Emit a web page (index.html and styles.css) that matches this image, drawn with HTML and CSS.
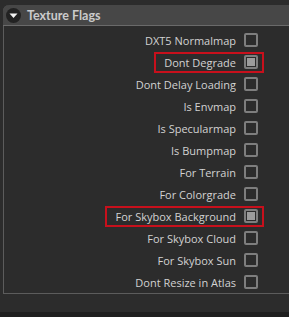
FILE: index.html
```html
<!DOCTYPE html>
<html>
<head>
	<title>Texture Flags</title>
	<meta charset="utf-8">
	<link rel="stylesheet" href="styles.css">
</head>

<body>
	<div class="panel">
		<div class="panel-head">
			<span class="toggle"><svg width="15" height="15" viewBox="0 0 15 15"><circle cx="7.5" cy="7.5" r="7.5" fill="#222"/><path d="M3.5 5.5 L11.5 5.5 L7.5 10 Z" fill="#f2f2f2"/></svg></span>
			<span class="title">Texture Flags</span>
		</div>
		<div class="flags">
			<div class="row"><label class="item">DXT5 Normalmap<span class="box"></span></label></div>
			<div class="row"><label class="item mark">Dont Degrade<span class="box on"></span></label></div>
			<div class="row"><label class="item">Dont Delay Loading<span class="box"></span></label></div>
			<div class="row"><label class="item">Is Envmap<span class="box"></span></label></div>
			<div class="row"><label class="item">Is Specularmap<span class="box"></span></label></div>
			<div class="row"><label class="item">Is Bumpmap<span class="box"></span></label></div>
			<div class="row"><label class="item">For Terrain<span class="box"></span></label></div>
			<div class="row"><label class="item">For Colorgrade<span class="box"></span></label></div>
			<div class="row"><label class="item mark">For Skybox Background<span class="box on"></span></label></div>
			<div class="row"><label class="item">For Skybox Cloud<span class="box"></span></label></div>
			<div class="row"><label class="item">For Skybox Sun<span class="box"></span></label></div>
			<div class="row"><label class="item">Dont Resize in Atlas<span class="box"></span></label></div>
		</div>
	</div>
	<div class="bottom"></div>
</body>
</html>
```

FILE: styles.css
```css
html, body{
	margin: 0;
	height: 100%;
}

body{
	background: #2c2c2c;
	font-family: 'Open Sans', sans-serif;
	font-size: 11px;
	color: #d2d2d2;
	padding-top: 5px;
	box-sizing: border-box;
	display: flex;
	flex-direction: column;
}

.panel{
	flex: none;
	margin-left: 3px;
	border-left: 1px solid #5c5c5c;
	border-bottom: 1px solid #5c5c5c;
	border-top-left-radius: 6px;
}

.panel-head{
	height: 20px;
	background: #474747;
	border-top-left-radius: 6px;
	border-bottom: 1px solid #6a6a6a;
	display: flex;
	align-items: center;
	padding-left: 3px;
	margin-left: -1px;
}

.toggle{
	display: flex;
	width: 15px;
	height: 15px;
	margin-top: 1px;
}

.title{
	font-family: 'Lato', sans-serif;
	font-weight: bold;
	margin-left: 6px;
	color: #cbcbcb;
	font-size: 12.5px;
}

.flags{
	padding-top: 3px;
}

.row{
	height: 22px;
	display: flex;
	justify-content: flex-end;
	align-items: center;
	padding-right: 25px;
}

.item{
	display: flex;
	align-items: center;
	gap: 8px;
	padding: 1px 4px 1px 8px;
	border: 2px solid transparent;
}

.item.mark{
	border-color: #c8101c;
}

.box{
	width: 14px;
	height: 14px;
	box-sizing: border-box;
	border: 2px solid #7e7e7e;
	border-radius: 2px;
	display: flex;
	align-items: center;
	justify-content: center;
}

.box.on::after{
	content: "";
	width: 8px;
	height: 8px;
	background: #9c9c9c;
}

.bottom{
	flex: none;
	height: 5px;
	margin-top: auto;
	background: #1f1f1f;
}
```
